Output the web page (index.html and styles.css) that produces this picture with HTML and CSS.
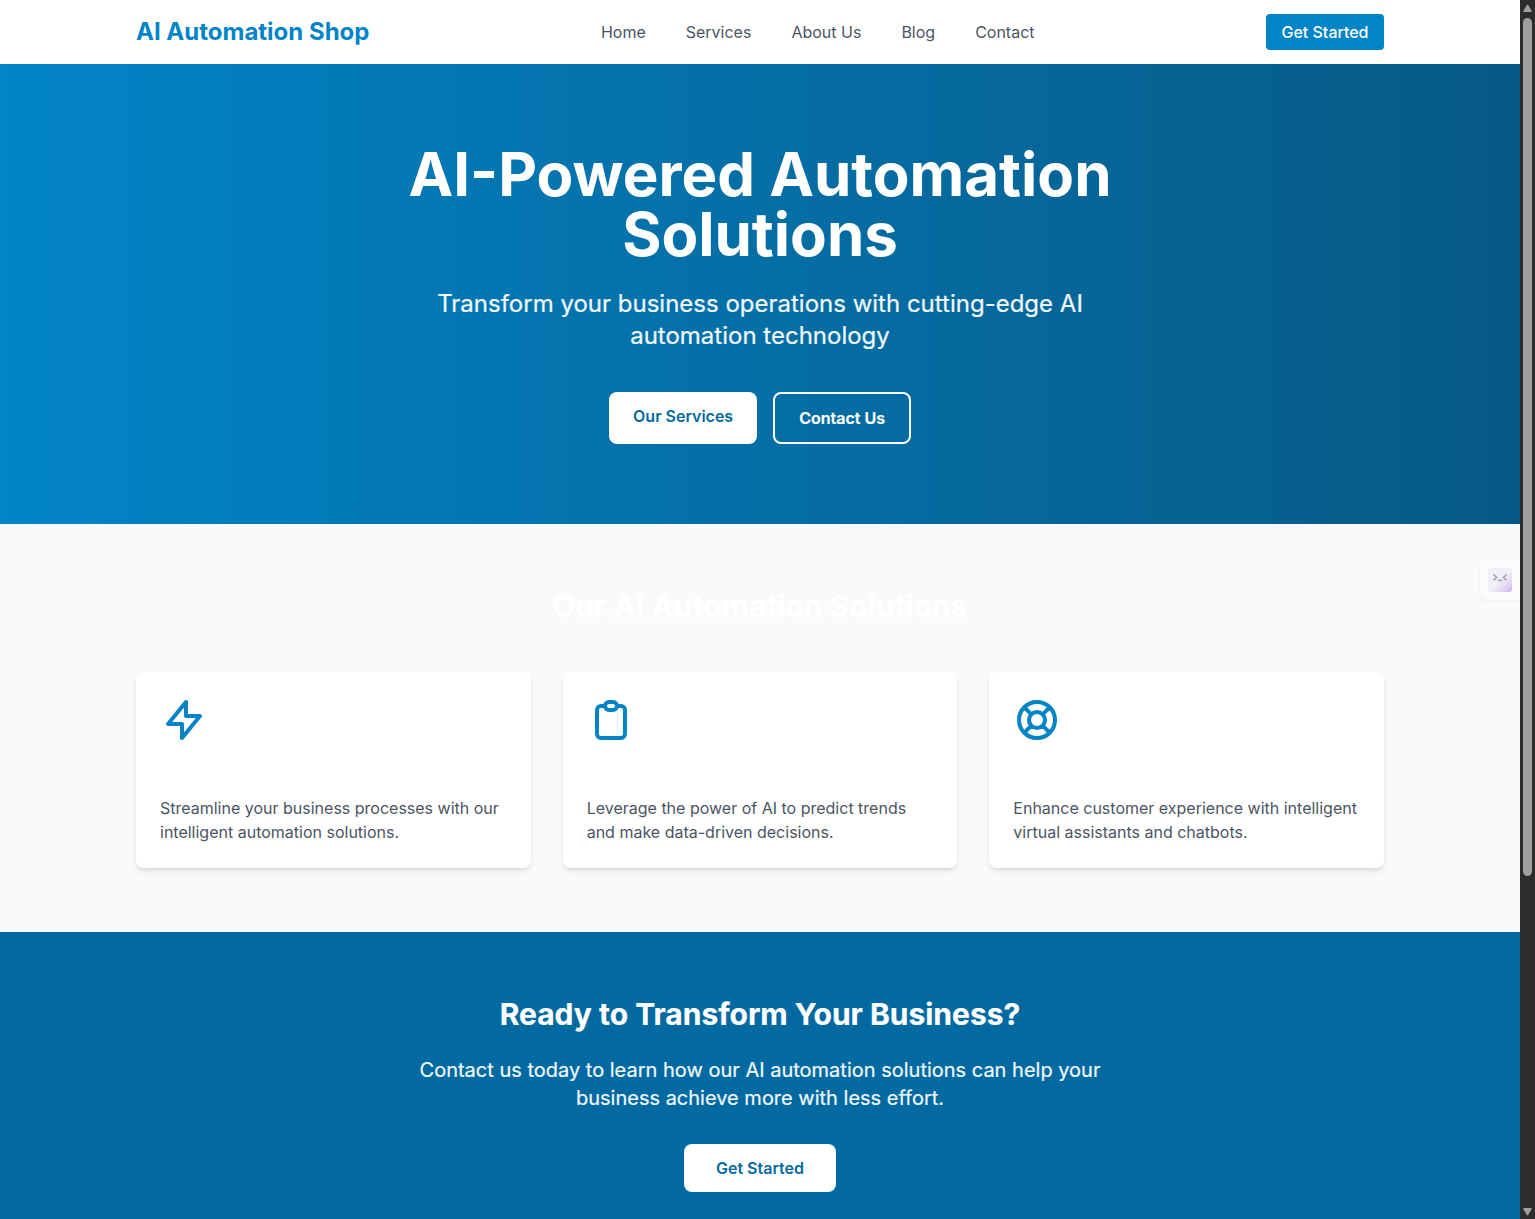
FILE: index.html
```
<!DOCTYPE html>
<html lang="en">
<head>
<meta charset="utf-8">
<title>AI Automation Shop</title>
<link rel="stylesheet" href="styles.css">
</head>
<body>
<div class="window">
  <div class="page">
    <header class="header container">
      <a class="logo">AI Automation Shop</a>
      <nav class="nav"><a>Home</a><a>Services</a><a>About Us</a><a>Blog</a><a>Contact</a></nav>
      <a class="header-cta">Get Started</a>
    </header>
    <section class="hero">
      <div class="narrow">
        <h1>AI-Powered Automation Solutions</h1>
        <p>Transform your business operations with cutting-edge AI automation technology</p>
        <div class="buttons">
          <a class="btn">Our Services</a>
          <a class="btn btn-outline">Contact Us</a>
        </div>
      </div>
    </section>
    <section class="solutions">
      <div class="container">
        <h2>Our AI Automation Solutions</h2>
        <div class="cards">
          <article class="card">
            <svg class="icon" viewBox="0 0 24 24"><path d="M13 10V3L4 14h7v7l9-11h-7z"/></svg>
            <p>Streamline your business processes with our intelligent automation solutions.</p>
          </article>
          <article class="card">
            <svg class="icon" viewBox="0 0 24 24"><path d="M9 5H7a2 2 0 00-2 2v12a2 2 0 002 2h10a2 2 0 002-2V7a2 2 0 00-2-2h-2M9 5a2 2 0 002 2h2a2 2 0 002-2M9 5a2 2 0 012-2h2a2 2 0 012 2"/></svg>
            <p>Leverage the power of AI to predict trends and make data-driven decisions.</p>
          </article>
          <article class="card">
            <svg class="icon" viewBox="0 0 24 24"><path d="M18.364 5.636l-3.536 3.536m0 5.656l3.536 3.536M9.172 9.172L5.636 5.636m3.536 9.192l-3.536 3.536M21 12a9 9 0 11-18 0 9 9 0 0118 0zm-5 0a4 4 0 11-8 0 4 4 0 018 0z"/></svg>
            <p>Enhance customer experience with intelligent virtual assistants and chatbots.</p>
          </article>
        </div>
      </div>
    </section>
    <section class="cta">
      <div class="narrow">
        <h2>Ready to Transform Your Business?</h2>
        <p>Contact us today to learn how our AI automation solutions can help your business achieve more with less effort.</p>
        <a class="btn btn-wide">Get Started</a>
      </div>
    </section>
    <div class="assistant">
      <svg viewBox="0 0 24 24">
        <defs><linearGradient id="tile" x1="0" y1="0" x2="1" y2="1"><stop offset=".5" stop-color="#eff0f7"/><stop offset=".8" stop-color="#dfd1f1"/><stop offset="1" stop-color="#cda9e9"/></linearGradient></defs>
        <rect width="24" height="24" rx="3" fill="url(#tile)"/>
        <path d="M5.5 6.500l3 3-3 3M18.500 6.500l-3 3 3 3M10 12q2 1.200 4 0" fill="none" stroke="#a3a5ad" stroke-width="1.700"/>
      </svg>
    </div>
  </div>
  <div class="scrollbar">
    <svg class="arrow" viewBox="0 0 9 8"><path d="M4.500 1.500L8 7.200H1z"/></svg>
    <div class="thumb"></div>
    <svg class="arrow arrow-down" viewBox="0 0 9 8"><path d="M4.500 6.500L8 .8H1z"/></svg>
  </div>
</div>
</body>
</html>
```
FILE: styles.css
```
* { box-sizing: border-box; margin: 0; padding: 0; }
body { font: 16px/24px Inter, "Liberation Sans", sans-serif; color: #4b5563; overflow: hidden; }
.window { display: flex; height: 1219px; overflow: hidden; }
.page { flex: 1; position: relative; background: #fff; }
.container { width: 1248px; margin: 0 auto; }
.narrow { width: 768px; margin: 0 auto; text-align: center; color: #fff; }

.header { height: 64px; display: flex; align-items: center; justify-content: space-between; }
.logo { font-size: 24px; line-height: 32px; font-weight: 700; color: #0284c7; }
.nav { display: flex; gap: 40px; }
.header-cta { width: 118px; padding: 6px 0; text-align: center; border-radius: 4px; background: #0284c7; color: #fff; font-weight: 500; }

.hero { height: 460px; padding: 80px 0; background: linear-gradient(to right, #0284c7, #075985); }
.hero h1 { font-size: 60px; line-height: 60px; font-weight: 700; margin-bottom: 24px; }
.hero p { font-size: 24px; line-height: 32px; margin-bottom: 40px; color: #f0f9ff; -webkit-text-stroke: .2px; }
.buttons { display: flex; justify-content: center; gap: 16px; }
.btn { display: inline-block; padding: 12px 24px; border-radius: 8px; background: #fff; color: #0369a1; font-weight: 600; }
.btn-outline { border: 2px solid #fff; background: transparent; color: #fff; -webkit-text-stroke: .2px; }
.btn-wide { padding: 12px 32px; }

.solutions { height: 408px; padding: 64px 0; background: #f9fafb; }
.solutions h2 { font-size: 30px; line-height: 36px; font-weight: 700; color: #fff; text-align: center; margin-bottom: 48px; }
.cards { display: grid; grid-template-columns: repeat(3, 1fr); gap: 32px; }
.card { padding: 24px; border-radius: 8px; background: #fff; box-shadow: 0 4px 6px -1px rgb(0 0 0 / .1), 0 2px 4px -2px rgb(0 0 0 / .1); }
.icon { display: block; width: 48px; height: 48px; margin-bottom: 52px; fill: none; stroke: #0284c7; stroke-width: 2; stroke-linecap: round; stroke-linejoin: round; }

.cta { height: 287px; padding-top: 64px; background: #0369a1; }
.cta h2 { font-size: 30px; line-height: 36px; font-weight: 700; margin-bottom: 24px; -webkit-text-stroke: .2px; }
.cta p { font-size: 20px; line-height: 28px; width: 700px; margin: 0 auto 32px; color: #f0f9ff; -webkit-text-stroke: .2px; }

.assistant { position: absolute; right: 0; top: 560px; width: 40px; height: 40px; padding: 8px; border-radius: 8px 0 0 8px; background: #fafbfc; box-shadow: 0 1px 3px rgb(0 0 0 / .06); }
.assistant svg { display: block; width: 24px; height: 24px; }

.scrollbar { width: 15px; padding: 4px 3px 3px; background: #2c2c2c; display: flex; flex-direction: column; }
.arrow { width: 9px; height: 8px; fill: #9f9f9f; stroke: #9f9f9f; stroke-width: 1.5; stroke-linejoin: round; }
.thumb { width: 9px; height: 858px; margin-top: 6px; border-radius: 5px; background: #9f9f9f; }
.arrow-down { margin-top: auto; }
```
